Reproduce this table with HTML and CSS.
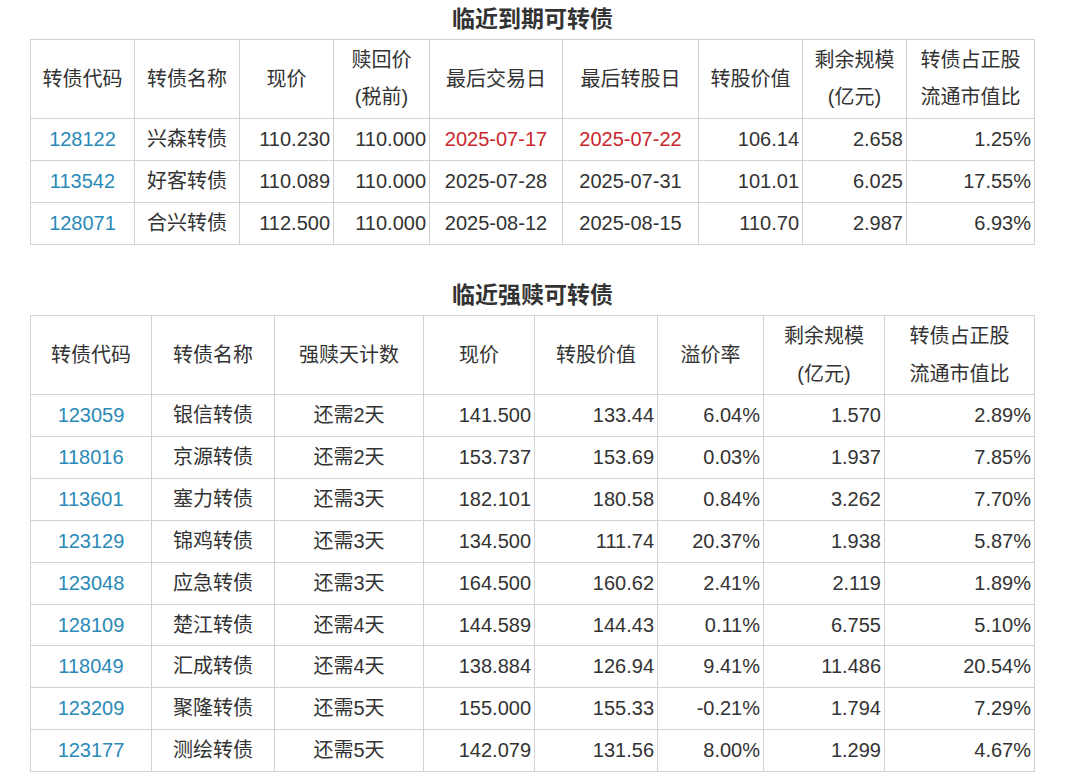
FILE: index.html
```
<!DOCTYPE html>
<html lang="zh-CN">
<head>
<meta charset="utf-8">
<title>可转债</title>
<link rel="stylesheet" href="styles.css">
</head>
<body>
<div class="page">
  <section class="block">
    <h2 class="title">临近到期可转债</h2>
    <table class="grid t1">
      <colgroup>
        <col class="w104"><col class="w105"><col class="w94"><col class="w96"><col class="w133"><col class="w136"><col class="w104"><col class="w104"><col class="w128">
      </colgroup>
      <thead>
        <tr>
          <th>转债代码</th><th>转债名称</th><th>现价</th><th>赎回价<br>(税前)</th><th>最后交易日</th><th>最后转股日</th><th>转股价值</th><th>剩余规模<br>(亿元)</th><th>转债占正股<br>流通市值比</th>
        </tr>
      </thead>
      <tbody>
        <tr><td class="c code">128122</td><td class="c">兴森转债</td><td class="r">110.230</td><td class="r">110.000</td><td class="c red">2025-07-17</td><td class="c red">2025-07-22</td><td class="r">106.14</td><td class="r">2.658</td><td class="r">1.25%</td></tr>
        <tr><td class="c code">113542</td><td class="c">好客转债</td><td class="r">110.089</td><td class="r">110.000</td><td class="c">2025-07-28</td><td class="c">2025-07-31</td><td class="r">101.01</td><td class="r">6.025</td><td class="r">17.55%</td></tr>
        <tr><td class="c code">128071</td><td class="c">合兴转债</td><td class="r">112.500</td><td class="r">110.000</td><td class="c">2025-08-12</td><td class="c">2025-08-15</td><td class="r">110.70</td><td class="r">2.987</td><td class="r">6.93%</td></tr>
      </tbody>
    </table>
  </section>

  <section class="block second">
    <h2 class="title">临近强赎可转债</h2>
    <table class="grid t2">
      <colgroup>
        <col class="w121"><col class="w123"><col class="w149"><col class="w111"><col class="w123"><col class="w106"><col class="w121"><col class="w150">
      </colgroup>
      <thead>
        <tr>
          <th>转债代码</th><th>转债名称</th><th>强赎天计数</th><th>现价</th><th>转股价值</th><th>溢价率</th><th>剩余规模<br>(亿元)</th><th>转债占正股<br>流通市值比</th>
        </tr>
      </thead>
      <tbody>
        <tr><td class="c code">123059</td><td class="c">银信转债</td><td class="c">还需2天</td><td class="r">141.500</td><td class="r">133.44</td><td class="r">6.04%</td><td class="r">1.570</td><td class="r">2.89%</td></tr>
        <tr><td class="c code">118016</td><td class="c">京源转债</td><td class="c">还需2天</td><td class="r">153.737</td><td class="r">153.69</td><td class="r">0.03%</td><td class="r">1.937</td><td class="r">7.85%</td></tr>
        <tr><td class="c code">113601</td><td class="c">塞力转债</td><td class="c">还需3天</td><td class="r">182.101</td><td class="r">180.58</td><td class="r">0.84%</td><td class="r">3.262</td><td class="r">7.70%</td></tr>
        <tr><td class="c code">123129</td><td class="c">锦鸡转债</td><td class="c">还需3天</td><td class="r">134.500</td><td class="r">111.74</td><td class="r">20.37%</td><td class="r">1.938</td><td class="r">5.87%</td></tr>
        <tr><td class="c code">123048</td><td class="c">应急转债</td><td class="c">还需3天</td><td class="r">164.500</td><td class="r">160.62</td><td class="r">2.41%</td><td class="r">2.119</td><td class="r">1.89%</td></tr>
        <tr><td class="c code">128109</td><td class="c">楚江转债</td><td class="c">还需4天</td><td class="r">144.589</td><td class="r">144.43</td><td class="r">0.11%</td><td class="r">6.755</td><td class="r">5.10%</td></tr>
        <tr><td class="c code">118049</td><td class="c">汇成转债</td><td class="c">还需4天</td><td class="r">138.884</td><td class="r">126.94</td><td class="r">9.41%</td><td class="r">11.486</td><td class="r">20.54%</td></tr>
        <tr><td class="c code">123209</td><td class="c">聚隆转债</td><td class="c">还需5天</td><td class="r">155.000</td><td class="r">155.33</td><td class="r">-0.21%</td><td class="r">1.794</td><td class="r">7.29%</td></tr>
        <tr><td class="c code">123177</td><td class="c">测绘转债</td><td class="c">还需5天</td><td class="r">142.079</td><td class="r">131.56</td><td class="r">8.00%</td><td class="r">1.299</td><td class="r">4.67%</td></tr>
      </tbody>
    </table>
  </section>
</div>
</body>
</html>
```

FILE: styles.css
```
html, body {
  margin: 0;
  padding: 0;
  background: #ffffff;
}

body {
  font-family: "Liberation Sans", "Noto Sans CJK SC", sans-serif;
  color: #333333;
}

.page {
  padding: 0 0 0 30px;
  width: 1005px;
}

.block {
  display: flex;
  flex-direction: column;
}

.second {
  margin-top: 31px;
}

.title {
  margin: 0;
  height: 39px;
  line-height: 39px;
  font-size: 23px;
  font-weight: bold;
  text-align: center;
  color: #333333;
}

.grid {
  border-collapse: collapse;
  table-layout: fixed;
  width: 1005px;
  font-size: 20px;
}

.grid th,
.grid td {
  border: 1px solid #d2d2d2;
  padding: 0 3px;
  white-space: nowrap;
  overflow: hidden;
}

.grid th {
  font-weight: normal;
  text-align: center;
  vertical-align: middle;
}

.t1 th {
  height: 78px;
  line-height: 37px;
}

.t1 td {
  height: 41px;
  line-height: 41px;
}

.t2 th {
  height: 78px;
  line-height: 38px;
}

.t2 td {
  height: 40.9px;
  line-height: 40.9px;
}

.c {
  text-align: center;
}

.r {
  text-align: right;
}

.code {
  color: #2a8ab8;
}

.red {
  color: #c9272d;
}

.w94 { width: 94px; }
.w96 { width: 96px; }
.w104 { width: 104px; }
.w105 { width: 105px; }
.w106 { width: 106px; }
.w111 { width: 111px; }
.w121 { width: 121px; }
.w123 { width: 123px; }
.w128 { width: 128px; }
.w133 { width: 133px; }
.w136 { width: 136px; }
.w149 { width: 149px; }
.w150 { width: 150px; }
```
